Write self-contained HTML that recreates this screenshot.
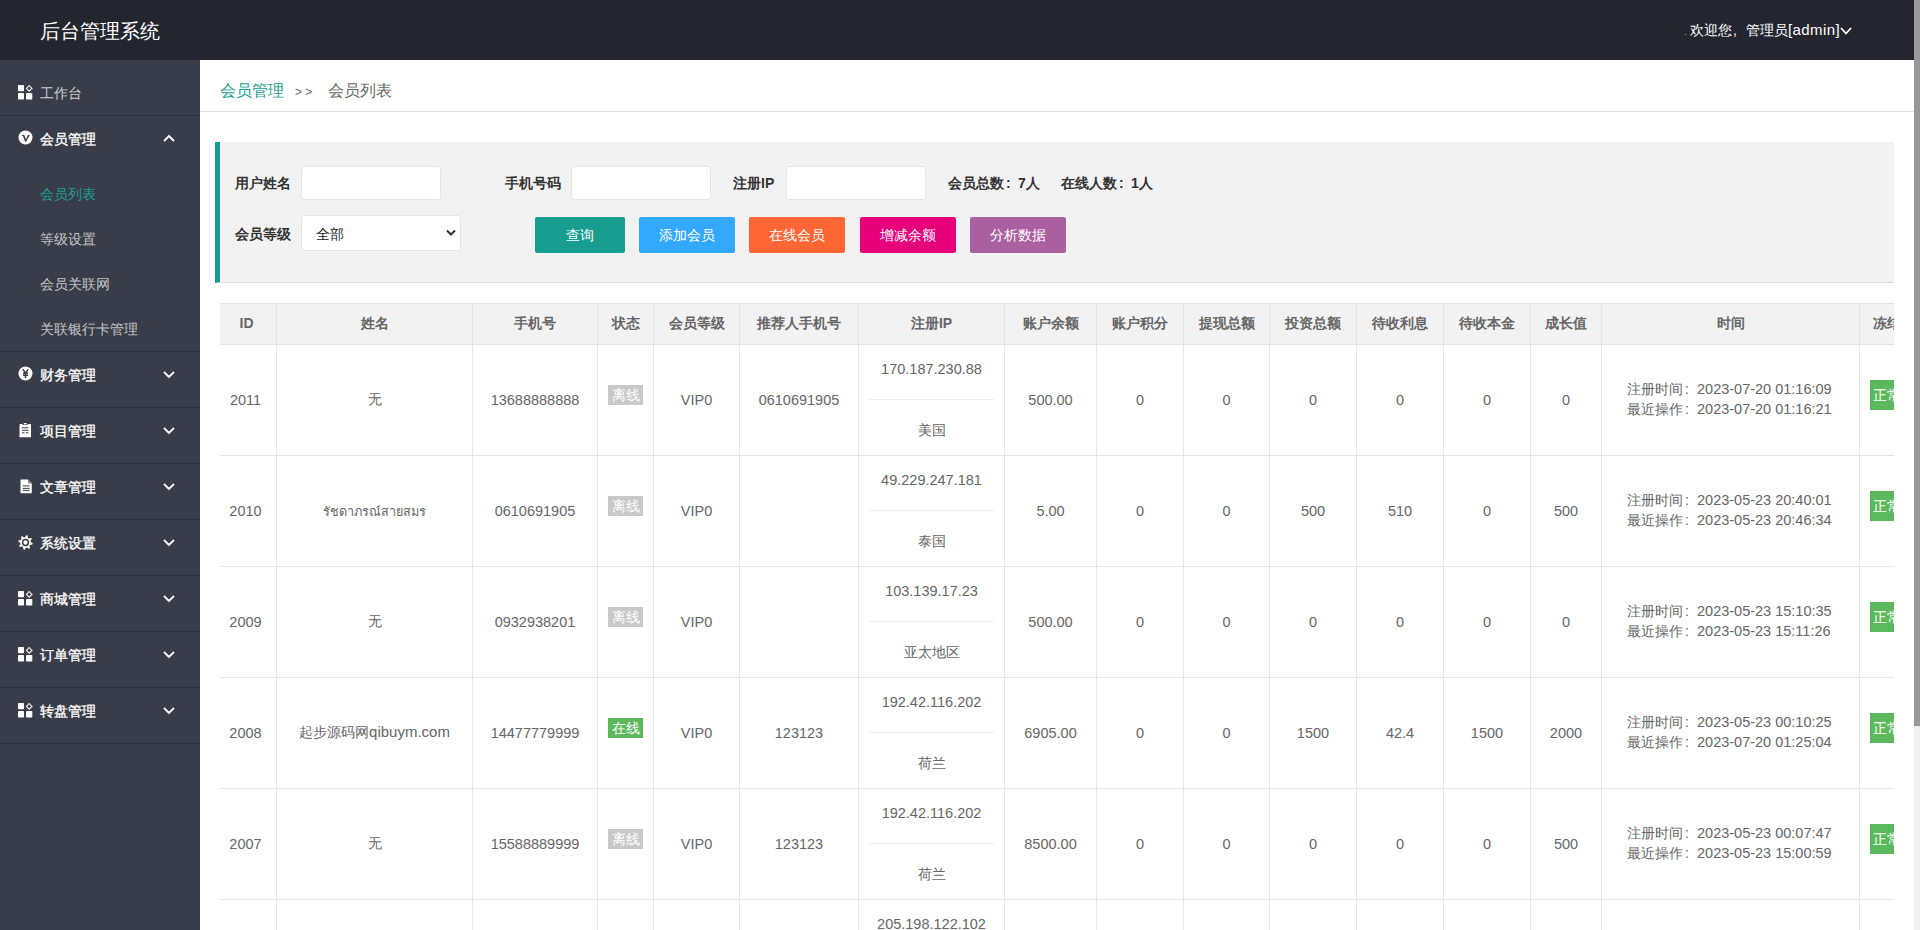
<!DOCTYPE html><html><head><meta charset="utf-8"><title>后台管理系统</title><style>

*{box-sizing:border-box;}
html,body{margin:0;padding:0;width:1920px;height:930px;overflow:hidden;background:#fff;font-family:"Liberation Sans", sans-serif;}
.a{position:absolute;}
.hdr{left:0;top:0;width:1914px;height:60px;background:#23262E;}
.logo{left:40px;top:17px;font-size:20px;line-height:28px;color:#fff;white-space:nowrap;}
.user{left:1690px;top:20px;font-size:14px;line-height:20px;color:#fff;white-space:nowrap;}
.side{left:0;top:60px;width:200px;height:870px;background:#393D49;}
.sep{left:0;width:200px;height:1px;background:#2F323B;}
.ni{left:40px;font-size:14px;line-height:20px;color:#fff;-webkit-text-stroke:0.3px #fff;white-space:nowrap;}
.sub{left:40px;font-size:14px;line-height:20px;color:rgba(255,255,255,.7);white-space:nowrap;}
.ic{left:18px;}
.chev{left:163px;}
.sb{left:1914px;top:0;width:6px;height:930px;background:#F1F1F1;}
.sbt{left:1914px;top:0;width:6px;height:726px;background:#999;}
.crumb{left:200px;top:60px;width:1714px;height:52px;border-bottom:1px solid #e2e2e2;}
.quote{left:215px;top:142px;width:1679px;height:141px;background:#F2F2F2;border-left:5px solid #189E90;border-bottom:1px solid #dcdcdc;}
.lbl{font-size:14px;line-height:20px;color:#333;font-weight:bold;white-space:nowrap;}
.inp{background:#fff;border:1px solid #e6e6e6;border-radius:3px;}
.btn{height:36px;line-height:36px;font-size:14px;color:#fff;text-align:center;border-radius:2px;white-space:nowrap;}
.th{font-size:14px;font-weight:bold;color:#666;text-align:center;white-space:nowrap;}
.td{font-size:14px;color:#666;text-align:center;white-space:nowrap;}
.n{font-size:14.5px;}
.c{display:inline-block;width:14px;padding-left:2px;}
.vl{width:1px;background:#e6e6e6;}
.hl{height:1px;background:#e6e6e6;}
.bdg{width:35px;height:20px;line-height:20px;font-size:14px;color:#fff;text-align:center;}

</style></head><body>
<div class="a hdr"></div>
<div class="a logo">后台管理系统</div>
<div class="a" style="left:1685px;top:34px;width:1px;height:1px;background:#999;"></div>
<div class="a user">欢迎您<span style="display:inline-block;width:14px;padding-left:1px">,</span>管理员<span style="font-size:15px;letter-spacing:0.4px">[admin]</span></div>
<svg class="a" style="left:1840px;top:26px" width="12" height="10" viewBox="0 0 12 10"><path d="M1 2 L6 7.5 L11 2" fill="none" stroke="#fff" stroke-width="1.8"/></svg>
<div class="a side"></div>
<svg class="a ic" style="top:85px" width="16" height="16" viewBox="0 0 16 16"><rect x="0" y="0" width="6" height="6.3" rx="0.8" fill="#fff"/><rect x="0" y="8" width="6" height="6.5" rx="0.8" fill="#fff"/><rect x="8" y="8" width="6.3" height="6.5" rx="0.8" fill="#fff"/><path d="M11.2 0.6 L14 3.4 L11.2 6.2 L8.4 3.4 Z" fill="none" stroke="#e8e8e8" stroke-width="1.2"/></svg>
<div class="a sub" style="top:83px;color:rgba(255,255,255,.75);font-weight:normal">工作台</div>
<div class="a sep" style="top:115px"></div>
<svg class="a" style="left:18px;top:130px" width="15" height="15" viewBox="0 0 15 15"><circle cx="7.5" cy="7.5" r="7" fill="#fff"/><path d="M3.6 5.7 Q4.6 4.6 6.1 4.8 L7.9 9.5 L9.9 4.9 L11.8 4.9 L8.1 11.8 L7.1 11.8 L5.0 6.3 Q4.5 5.6 3.6 5.7 Z" fill="#393D49"/></svg>
<div class="a ni" style="top:129px">会员管理</div>
<svg class="a chev" style="top:134px" width="12" height="9" viewBox="0 0 12 9"><path d="M1 7 L6 2 L11 7" fill="none" stroke="#fff" stroke-width="1.8"/></svg>
<div class="a sub" style="top:184px;color:#189E90;">会员列表</div>
<div class="a sub" style="top:229px;">等级设置</div>
<div class="a sub" style="top:274px;">会员关联网</div>
<div class="a sub" style="top:319px;">关联银行卡管理</div>
<div class="a sep" style="top:351px"></div>
<div class="a ni" style="top:365px">财务管理</div>
<svg class="a chev" style="top:370px" width="12" height="9" viewBox="0 0 12 9"><path d="M1 2 L6 7 L11 2" fill="none" stroke="#fff" stroke-width="1.8"/></svg>
<svg class="a" style="left:18px;top:366px" width="15" height="15" viewBox="0 0 15 15"><circle cx="7.5" cy="7.5" r="7" fill="#fff"/><path d="M4.8 3.4 L7.5 7 L10.2 3.4 M5 7.3 H10 M5 9.3 H10 M7.5 7 V12" fill="none" stroke="#393D49" stroke-width="1.5"/></svg>
<div class="a sep" style="top:407px"></div>
<div class="a ni" style="top:421px">项目管理</div>
<svg class="a chev" style="top:426px" width="12" height="9" viewBox="0 0 12 9"><path d="M1 2 L6 7 L11 2" fill="none" stroke="#fff" stroke-width="1.8"/></svg>
<svg class="a" style="left:19px;top:423px" width="13" height="15" viewBox="0 0 13 15"><path d="M0.5 1.5 Q0.5 0.9 1.2 0.9 H3.4 L4.2 1.9 H8.3 L9.1 0.9 H11.3 Q12 0.9 12 1.5 V13.8 Q12 14.3 11.4 14.3 H1.1 Q0.5 14.3 0.5 13.8 Z" fill="#fff"/><rect x="4.6" y="0" width="3.3" height="1.6" rx="0.8" fill="#fff"/><path d="M3 4.8 H9.5 M3 7.3 H9.5 M3 9.8 H5.5 M7 9.8 H9.5" stroke="#393D49" stroke-width="1.1"/></svg>
<div class="a sep" style="top:463px"></div>
<div class="a ni" style="top:477px">文章管理</div>
<svg class="a chev" style="top:482px" width="12" height="9" viewBox="0 0 12 9"><path d="M1 2 L6 7 L11 2" fill="none" stroke="#fff" stroke-width="1.8"/></svg>
<svg class="a" style="left:20px;top:479px" width="13" height="15" viewBox="0 0 13 15"><path d="M0.5 1.2 Q0.5 0.6 1.1 0.6 H8 L11.8 4.4 V13.6 Q11.8 14.2 11.2 14.2 H1.1 Q0.5 14.2 0.5 13.6 Z" fill="#fff"/><path d="M8 0.6 V4.4 H11.8" fill="#8a8d96"/><path d="M2.8 6.9 H9.6 M2.8 9.4 H9.6 M2.8 11.4 H9.6" stroke="#393D49" stroke-width="1"/></svg>
<div class="a sep" style="top:519px"></div>
<div class="a ni" style="top:533px">系统设置</div>
<svg class="a chev" style="top:538px" width="12" height="9" viewBox="0 0 12 9"><path d="M1 2 L6 7 L11 2" fill="none" stroke="#fff" stroke-width="1.8"/></svg>
<svg class="a" style="left:18px;top:535px" width="15" height="15" viewBox="0 0 15 15"><polygon points="8.21,0.33 9.59,0.61 9.95,2.91 10.80,3.48 13.07,2.93 13.85,4.11 12.48,5.99 12.67,6.99 14.67,8.21 14.39,9.59 12.09,9.95 11.52,10.80 12.07,13.07 10.89,13.85 9.01,12.48 8.01,12.67 6.79,14.67 5.41,14.39 5.05,12.09 4.20,11.52 1.93,12.07 1.15,10.89 2.52,9.01 2.33,8.01 0.33,6.79 0.61,5.41 2.91,5.05 3.48,4.20 2.93,1.93 4.11,1.15 5.99,2.52 6.99,2.33" fill="#fff"/><circle cx="7.5" cy="7.5" r="2.9" fill="none" stroke="#393D49" stroke-width="1.5"/></svg>
<div class="a sep" style="top:575px"></div>
<div class="a ni" style="top:589px">商城管理</div>
<svg class="a chev" style="top:594px" width="12" height="9" viewBox="0 0 12 9"><path d="M1 2 L6 7 L11 2" fill="none" stroke="#fff" stroke-width="1.8"/></svg>
<svg class="a ic" style="top:591px" width="16" height="16" viewBox="0 0 16 16"><rect x="0" y="0" width="6" height="6.3" rx="0.8" fill="#fff"/><rect x="0" y="8" width="6" height="6.5" rx="0.8" fill="#fff"/><rect x="8" y="8" width="6.3" height="6.5" rx="0.8" fill="#fff"/><path d="M11.2 0.6 L14 3.4 L11.2 6.2 L8.4 3.4 Z" fill="none" stroke="#e8e8e8" stroke-width="1.2"/></svg>
<div class="a sep" style="top:631px"></div>
<div class="a ni" style="top:645px">订单管理</div>
<svg class="a chev" style="top:650px" width="12" height="9" viewBox="0 0 12 9"><path d="M1 2 L6 7 L11 2" fill="none" stroke="#fff" stroke-width="1.8"/></svg>
<svg class="a ic" style="top:647px" width="16" height="16" viewBox="0 0 16 16"><rect x="0" y="0" width="6" height="6.3" rx="0.8" fill="#fff"/><rect x="0" y="8" width="6" height="6.5" rx="0.8" fill="#fff"/><rect x="8" y="8" width="6.3" height="6.5" rx="0.8" fill="#fff"/><path d="M11.2 0.6 L14 3.4 L11.2 6.2 L8.4 3.4 Z" fill="none" stroke="#e8e8e8" stroke-width="1.2"/></svg>
<div class="a sep" style="top:687px"></div>
<div class="a ni" style="top:701px">转盘管理</div>
<svg class="a chev" style="top:706px" width="12" height="9" viewBox="0 0 12 9"><path d="M1 2 L6 7 L11 2" fill="none" stroke="#fff" stroke-width="1.8"/></svg>
<svg class="a ic" style="top:703px" width="16" height="16" viewBox="0 0 16 16"><rect x="0" y="0" width="6" height="6.3" rx="0.8" fill="#fff"/><rect x="0" y="8" width="6" height="6.5" rx="0.8" fill="#fff"/><rect x="8" y="8" width="6.3" height="6.5" rx="0.8" fill="#fff"/><path d="M11.2 0.6 L14 3.4 L11.2 6.2 L8.4 3.4 Z" fill="none" stroke="#e8e8e8" stroke-width="1.2"/></svg>
<div class="a sep" style="top:743px"></div>
<div class="a sb"></div><div class="a sbt"></div>
<div class="a crumb"></div>
<div class="a" style="left:220px;top:80px;font-size:16px;line-height:22px;white-space:nowrap;"><span style="color:#189E90">会员管理</span><span style="color:#666;margin-left:11px;font-size:12px;">&gt; &gt;</span><span style="color:#666;margin-left:16px">会员列表</span></div>
<div class="a quote"></div>
<div class="a lbl" style="left:235px;top:173px">用户姓名</div>
<div class="a inp" style="left:301px;top:166px;width:140px;height:34px"></div>
<div class="a lbl" style="left:505px;top:173px">手机号码</div>
<div class="a inp" style="left:571px;top:166px;width:140px;height:34px"></div>
<div class="a lbl" style="left:733px;top:173px">注册IP</div>
<div class="a inp" style="left:786px;top:166px;width:140px;height:34px"></div>
<div class="a lbl" style="left:948px;top:173px">会员总数<span class="c">:</span>7人</div>
<div class="a lbl" style="left:1061px;top:173px">在线人数<span class="c">:</span>1人</div>
<div class="a lbl" style="left:235px;top:224px">会员等级</div>
<div class="a inp" style="left:301px;top:215px;width:160px;height:36px"></div>
<div class="a" style="left:316px;top:224px;font-size:14px;line-height:20px;color:#222">全部</div>
<svg class="a" style="left:446px;top:229px" width="10" height="8" viewBox="0 0 10 8"><path d="M1 1.5 L5 5.5 L9 1.5" fill="none" stroke="#333" stroke-width="2"/></svg>
<div class="a btn" style="left:535px;top:217px;width:90px;background:#189E90">查询</div>
<div class="a btn" style="left:639px;top:217px;width:96px;background:#33A8FF">添加会员</div>
<div class="a btn" style="left:749px;top:217px;width:96px;background:#FF6633">在线会员</div>
<div class="a btn" style="left:860px;top:217px;width:96px;background:#E6007A">增减余额</div>
<div class="a btn" style="left:970px;top:217px;width:96px;background:#AA5FA0">分析数据</div>
<div class="a" style="left:0;top:0;width:1894px;height:930px;overflow:hidden">
<div class="a" style="left:220px;top:303px;width:1700px;height:41px;background:#F2F2F2"></div>
<div class="a hl" style="left:220px;top:303px;width:1700px"></div>
<div class="a hl" style="left:220px;top:344px;width:1700px"></div>
<div class="a hl" style="left:220px;top:455px;width:1700px"></div>
<div class="a hl" style="left:220px;top:566px;width:1700px"></div>
<div class="a hl" style="left:220px;top:677px;width:1700px"></div>
<div class="a hl" style="left:220px;top:788px;width:1700px"></div>
<div class="a hl" style="left:220px;top:899px;width:1700px"></div>
<div class="a hl" style="left:220px;top:1010px;width:1700px"></div>
<div class="a vl" style="left:276px;top:303px;height:700px"></div>
<div class="a vl" style="left:472px;top:303px;height:700px"></div>
<div class="a vl" style="left:597px;top:303px;height:700px"></div>
<div class="a vl" style="left:653px;top:303px;height:700px"></div>
<div class="a vl" style="left:739px;top:303px;height:700px"></div>
<div class="a vl" style="left:858px;top:303px;height:700px"></div>
<div class="a vl" style="left:1004px;top:303px;height:700px"></div>
<div class="a vl" style="left:1096px;top:303px;height:700px"></div>
<div class="a vl" style="left:1183px;top:303px;height:700px"></div>
<div class="a vl" style="left:1269px;top:303px;height:700px"></div>
<div class="a vl" style="left:1356px;top:303px;height:700px"></div>
<div class="a vl" style="left:1443px;top:303px;height:700px"></div>
<div class="a vl" style="left:1530px;top:303px;height:700px"></div>
<div class="a vl" style="left:1601px;top:303px;height:700px"></div>
<div class="a vl" style="left:1859px;top:303px;height:700px"></div>
<div class="a th" style="left:219px;top:313px;width:55px;line-height:20px">ID</div>
<div class="a th" style="left:277px;top:313px;width:195px;line-height:20px">姓名</div>
<div class="a th" style="left:473px;top:313px;width:124px;line-height:20px">手机号</div>
<div class="a th" style="left:598px;top:313px;width:55px;line-height:20px">状态</div>
<div class="a th" style="left:654px;top:313px;width:85px;line-height:20px">会员等级</div>
<div class="a th" style="left:740px;top:313px;width:118px;line-height:20px">推荐人手机号</div>
<div class="a th" style="left:859px;top:313px;width:145px;line-height:20px">注册IP</div>
<div class="a th" style="left:1005px;top:313px;width:91px;line-height:20px">账户余额</div>
<div class="a th" style="left:1097px;top:313px;width:86px;line-height:20px">账户积分</div>
<div class="a th" style="left:1184px;top:313px;width:85px;line-height:20px">提现总额</div>
<div class="a th" style="left:1270px;top:313px;width:86px;line-height:20px">投资总额</div>
<div class="a th" style="left:1357px;top:313px;width:86px;line-height:20px">待收利息</div>
<div class="a th" style="left:1444px;top:313px;width:86px;line-height:20px">待收本金</div>
<div class="a th" style="left:1531px;top:313px;width:70px;line-height:20px">成长值</div>
<div class="a th" style="left:1602px;top:313px;width:257px;line-height:20px">时间</div>
<div class="a th" style="left:1873px;top:313px;line-height:20px">冻结</div>
<div class="a td n" style="left:218px;top:390px;width:55px;line-height:20px">2011</div>
<div class="a td" style="left:277px;top:389px;width:195px;line-height:20px">无</div>
<div class="a td n" style="left:473px;top:390px;width:124px;line-height:20px">13688888888</div>
<div class="a bdg" style="left:608px;top:385px;background:#C9C9C9">离线</div>
<div class="a td n" style="left:654px;top:390px;width:85px;line-height:20px">VIP0</div>
<div class="a td n" style="left:740px;top:390px;width:118px;line-height:20px">0610691905</div>
<div class="a td n" style="left:859px;top:359px;width:145px;line-height:20px">170.187.230.88</div>
<div class="a" style="left:869px;top:399px;width:125px;height:1px;background:#eee"></div>
<div class="a td" style="left:859px;top:420px;width:145px;line-height:20px">美国</div>
<div class="a td n" style="left:1005px;top:390px;width:91px;line-height:20px">500.00</div>
<div class="a td n" style="left:1097px;top:390px;width:86px;line-height:20px">0</div>
<div class="a td n" style="left:1184px;top:390px;width:85px;line-height:20px">0</div>
<div class="a td n" style="left:1270px;top:390px;width:86px;line-height:20px">0</div>
<div class="a td n" style="left:1357px;top:390px;width:86px;line-height:20px">0</div>
<div class="a td n" style="left:1444px;top:390px;width:86px;line-height:20px">0</div>
<div class="a td n" style="left:1531px;top:390px;width:70px;line-height:20px">0</div>
<div class="a td" style="left:1627px;top:379px;text-align:left;line-height:20px">注册时间<span class="c">:</span><span class="n">2023-07-20 01:16:09</span><br>最近操作<span class="c">:</span><span class="n">2023-07-20 01:16:21</span></div>
<div class="a" style="left:1870px;top:380px;width:56px;height:30px;line-height:30px;background:#5CB85C;color:#fff;font-size:14px;text-align:left;padding-left:3px;white-space:nowrap">正常</div>
<div class="a td n" style="left:218px;top:501px;width:55px;line-height:20px">2010</div>
<div class="a td" style="left:277px;top:500px;width:195px;line-height:20px"><span style="font-size:12.6px;position:relative;top:1px">รัชดาภรณ์สายสมร</span></div>
<div class="a td n" style="left:473px;top:501px;width:124px;line-height:20px">0610691905</div>
<div class="a bdg" style="left:608px;top:496px;background:#C9C9C9">离线</div>
<div class="a td n" style="left:654px;top:501px;width:85px;line-height:20px">VIP0</div>
<div class="a td n" style="left:859px;top:470px;width:145px;line-height:20px">49.229.247.181</div>
<div class="a" style="left:869px;top:510px;width:125px;height:1px;background:#eee"></div>
<div class="a td" style="left:859px;top:531px;width:145px;line-height:20px">泰国</div>
<div class="a td n" style="left:1005px;top:501px;width:91px;line-height:20px">5.00</div>
<div class="a td n" style="left:1097px;top:501px;width:86px;line-height:20px">0</div>
<div class="a td n" style="left:1184px;top:501px;width:85px;line-height:20px">0</div>
<div class="a td n" style="left:1270px;top:501px;width:86px;line-height:20px">500</div>
<div class="a td n" style="left:1357px;top:501px;width:86px;line-height:20px">510</div>
<div class="a td n" style="left:1444px;top:501px;width:86px;line-height:20px">0</div>
<div class="a td n" style="left:1531px;top:501px;width:70px;line-height:20px">500</div>
<div class="a td" style="left:1627px;top:490px;text-align:left;line-height:20px">注册时间<span class="c">:</span><span class="n">2023-05-23 20:40:01</span><br>最近操作<span class="c">:</span><span class="n">2023-05-23 20:46:34</span></div>
<div class="a" style="left:1870px;top:491px;width:56px;height:30px;line-height:30px;background:#5CB85C;color:#fff;font-size:14px;text-align:left;padding-left:3px;white-space:nowrap">正常</div>
<div class="a td n" style="left:218px;top:612px;width:55px;line-height:20px">2009</div>
<div class="a td" style="left:277px;top:611px;width:195px;line-height:20px">无</div>
<div class="a td n" style="left:473px;top:612px;width:124px;line-height:20px">0932938201</div>
<div class="a bdg" style="left:608px;top:607px;background:#C9C9C9">离线</div>
<div class="a td n" style="left:654px;top:612px;width:85px;line-height:20px">VIP0</div>
<div class="a td n" style="left:859px;top:581px;width:145px;line-height:20px">103.139.17.23</div>
<div class="a" style="left:869px;top:621px;width:125px;height:1px;background:#eee"></div>
<div class="a td" style="left:859px;top:642px;width:145px;line-height:20px">亚太地区</div>
<div class="a td n" style="left:1005px;top:612px;width:91px;line-height:20px">500.00</div>
<div class="a td n" style="left:1097px;top:612px;width:86px;line-height:20px">0</div>
<div class="a td n" style="left:1184px;top:612px;width:85px;line-height:20px">0</div>
<div class="a td n" style="left:1270px;top:612px;width:86px;line-height:20px">0</div>
<div class="a td n" style="left:1357px;top:612px;width:86px;line-height:20px">0</div>
<div class="a td n" style="left:1444px;top:612px;width:86px;line-height:20px">0</div>
<div class="a td n" style="left:1531px;top:612px;width:70px;line-height:20px">0</div>
<div class="a td" style="left:1627px;top:601px;text-align:left;line-height:20px">注册时间<span class="c">:</span><span class="n">2023-05-23 15:10:35</span><br>最近操作<span class="c">:</span><span class="n">2023-05-23 15:11:26</span></div>
<div class="a" style="left:1870px;top:602px;width:56px;height:30px;line-height:30px;background:#5CB85C;color:#fff;font-size:14px;text-align:left;padding-left:3px;white-space:nowrap">正常</div>
<div class="a td n" style="left:218px;top:723px;width:55px;line-height:20px">2008</div>
<div class="a td" style="left:277px;top:722px;width:195px;line-height:20px">起步源码网<span style="font-size:15px">qibuym.com</span></div>
<div class="a td n" style="left:473px;top:723px;width:124px;line-height:20px">14477779999</div>
<div class="a bdg" style="left:608px;top:718px;background:#5CB85C">在线</div>
<div class="a td n" style="left:654px;top:723px;width:85px;line-height:20px">VIP0</div>
<div class="a td n" style="left:740px;top:723px;width:118px;line-height:20px">123123</div>
<div class="a td n" style="left:859px;top:692px;width:145px;line-height:20px">192.42.116.202</div>
<div class="a" style="left:869px;top:732px;width:125px;height:1px;background:#eee"></div>
<div class="a td" style="left:859px;top:753px;width:145px;line-height:20px">荷兰</div>
<div class="a td n" style="left:1005px;top:723px;width:91px;line-height:20px">6905.00</div>
<div class="a td n" style="left:1097px;top:723px;width:86px;line-height:20px">0</div>
<div class="a td n" style="left:1184px;top:723px;width:85px;line-height:20px">0</div>
<div class="a td n" style="left:1270px;top:723px;width:86px;line-height:20px">1500</div>
<div class="a td n" style="left:1357px;top:723px;width:86px;line-height:20px">42.4</div>
<div class="a td n" style="left:1444px;top:723px;width:86px;line-height:20px">1500</div>
<div class="a td n" style="left:1531px;top:723px;width:70px;line-height:20px">2000</div>
<div class="a td" style="left:1627px;top:712px;text-align:left;line-height:20px">注册时间<span class="c">:</span><span class="n">2023-05-23 00:10:25</span><br>最近操作<span class="c">:</span><span class="n">2023-07-20 01:25:04</span></div>
<div class="a" style="left:1870px;top:713px;width:56px;height:30px;line-height:30px;background:#5CB85C;color:#fff;font-size:14px;text-align:left;padding-left:3px;white-space:nowrap">正常</div>
<div class="a td n" style="left:218px;top:834px;width:55px;line-height:20px">2007</div>
<div class="a td" style="left:277px;top:833px;width:195px;line-height:20px">无</div>
<div class="a td n" style="left:473px;top:834px;width:124px;line-height:20px">15588889999</div>
<div class="a bdg" style="left:608px;top:829px;background:#C9C9C9">离线</div>
<div class="a td n" style="left:654px;top:834px;width:85px;line-height:20px">VIP0</div>
<div class="a td n" style="left:740px;top:834px;width:118px;line-height:20px">123123</div>
<div class="a td n" style="left:859px;top:803px;width:145px;line-height:20px">192.42.116.202</div>
<div class="a" style="left:869px;top:843px;width:125px;height:1px;background:#eee"></div>
<div class="a td" style="left:859px;top:864px;width:145px;line-height:20px">荷兰</div>
<div class="a td n" style="left:1005px;top:834px;width:91px;line-height:20px">8500.00</div>
<div class="a td n" style="left:1097px;top:834px;width:86px;line-height:20px">0</div>
<div class="a td n" style="left:1184px;top:834px;width:85px;line-height:20px">0</div>
<div class="a td n" style="left:1270px;top:834px;width:86px;line-height:20px">0</div>
<div class="a td n" style="left:1357px;top:834px;width:86px;line-height:20px">0</div>
<div class="a td n" style="left:1444px;top:834px;width:86px;line-height:20px">0</div>
<div class="a td n" style="left:1531px;top:834px;width:70px;line-height:20px">500</div>
<div class="a td" style="left:1627px;top:823px;text-align:left;line-height:20px">注册时间<span class="c">:</span><span class="n">2023-05-23 00:07:47</span><br>最近操作<span class="c">:</span><span class="n">2023-05-23 15:00:59</span></div>
<div class="a" style="left:1870px;top:824px;width:56px;height:30px;line-height:30px;background:#5CB85C;color:#fff;font-size:14px;text-align:left;padding-left:3px;white-space:nowrap">正常</div>
<div class="a td n" style="left:859px;top:914px;width:145px;line-height:20px">205.198.122.102</div>
<div class="a" style="left:869px;top:954px;width:125px;height:1px;background:#eee"></div>
</div>
</body></html>
